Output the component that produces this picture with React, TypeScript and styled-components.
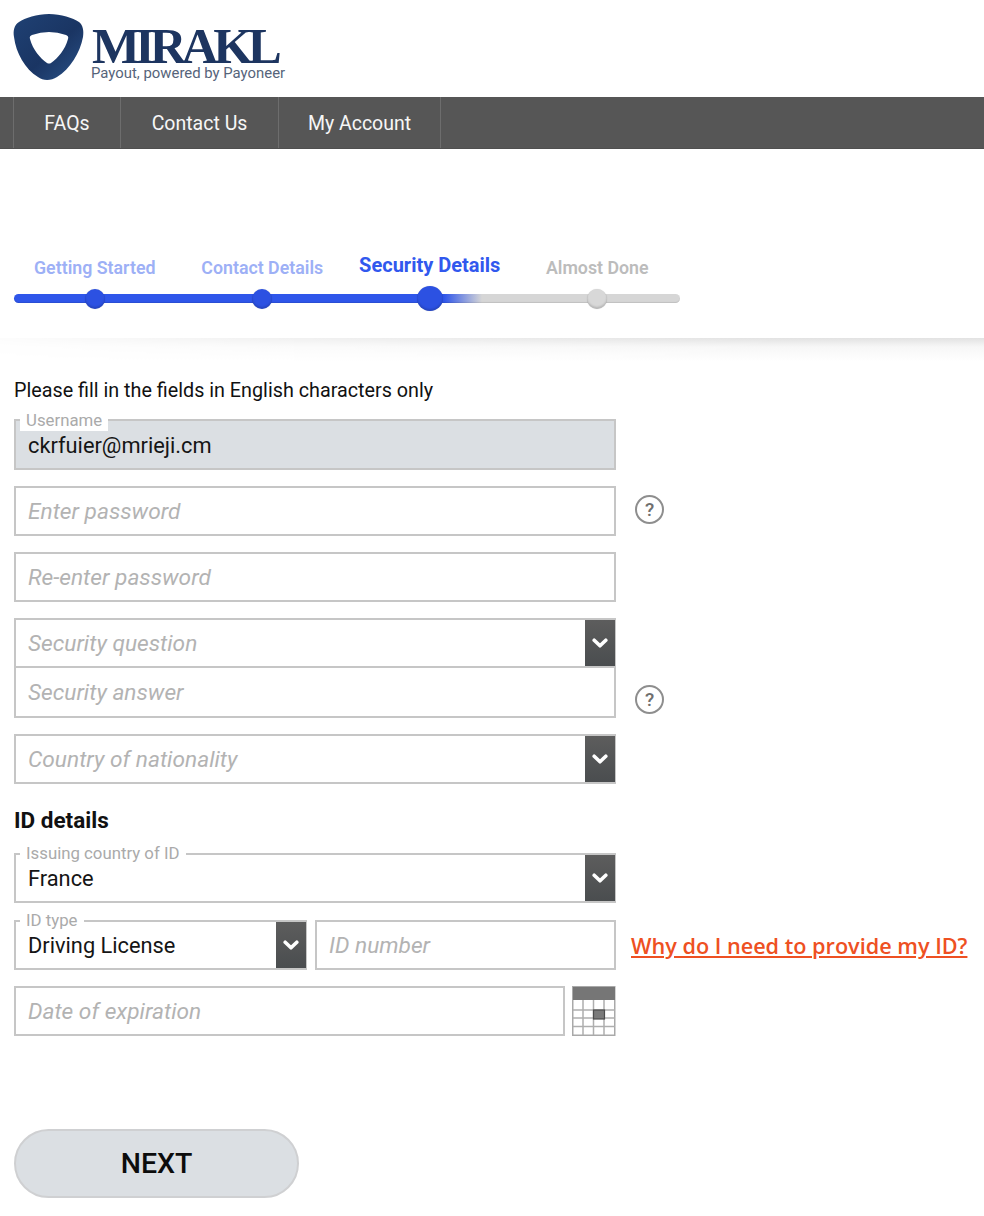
import React from "react";
import styled, { createGlobalStyle } from "styled-components";

const Global = createGlobalStyle`
  html, body { margin: 0; padding: 0; background: #fff; }
  body { font-family: Roboto, "Noto Sans", Arial, sans-serif; color: #111; }
  * { box-sizing: border-box; }
`;

const Page = styled.div`
  width: 984px;
  height: 1216px;
  overflow: hidden;
`;

const Header = styled.header`
  height: 97px;
  padding: 13px 0 0 13px;
  display: flex;
  gap: 7px;
`;

const Brand = styled.div`
  display: flex;
  flex-direction: column;
`;

const Wordmark = styled.div`
  font-family: "Liberation Serif", serif;
  font-weight: 700;
  font-size: 51px;
  line-height: 36px;
  height: 36px;
  margin-top: 15px;
  letter-spacing: -5.1px;
  color: #1d3560;
`;

const Tagline = styled.div`
  font-size: 14.9px;
  line-height: 16px;
  margin-left: -1px;
  margin-top: 1px;
  color: #56647a;
  white-space: nowrap;
`;

const Nav = styled.nav`
  height: 52px;
  background: #565656;
  padding-left: 13px;
  display: flex;
  border-bottom: 1px solid #4f4f4f;
`;

const NavItem = styled.a`
  display: flex;
  align-items: center;
  justify-content: center;
  padding-top: 2px;
  width: ${(p) => p.$w}px;
  color: #f6f6f6;
  font-size: 19.5px;
  border-left: 1px solid #6d6d6d;
  &:last-child { border-right: 1px solid #6d6d6d; }
`;

const Stepper = styled.section`
  height: 189px;
  padding: 103px 0 0 11px;
`;

const StepLabels = styled.div`
  display: grid;
  grid-template-columns: repeat(4, 167.5px);
  height: 36px;
  align-items: center;
`;

const StepLabel = styled.div`
  text-align: center;
  white-space: nowrap;
  font-weight: ${(p) => (p.$state === "current" ? 700 : 600)};
  font-size: ${(p) => (p.$state === "current" ? 20 : 17.8)}px;
  margin-top: ${(p) => (p.$state === "current" ? -11 : -6)}px;
  color: ${(p) =>
    p.$state === "current" ? "#3158ee" : p.$state === "done" ? "#9db0f6" : "#bcbcbc"};
`;

const Track = styled.div`
  position: relative;
  margin: 6px 0 0 3px;
  width: 666px;
  height: 9px;
  border-radius: 5px;
  background: linear-gradient(90deg, #2f56ea 0, #2f56ea 430px, #d6d6d6 468px, #d6d6d6 100%);
  box-shadow: inset 0 -1px 1px rgba(0,0,0,.1);
`;

const DotRow = styled.div`
  position: absolute;
  left: -3px;
  top: -8px;
  height: 25px;
  display: grid;
  grid-template-columns: repeat(4, 167.5px);
  align-items: center;
  justify-items: center;
`;

const Dot = styled.span`
  display: block;
  width: ${(p) => (p.$state === "current" ? 26 : 20)}px;
  height: ${(p) => (p.$state === "current" ? 25 : 20)}px;
  border-radius: 50%;
  background: ${(p) => (p.$state === "todo" ? "#d8d8d8" : "#2c51e2")};
  box-shadow: inset 0 -2px 2px rgba(0,0,0,.15), 0 0 1px rgba(0,0,0,.2);
`;

const ShadowBand = styled.div`
  height: 24px;
  background: linear-gradient(180deg, #e2e2e2 0, #f7f7f7 9px, #fff 24px);
  -webkit-mask-image: linear-gradient(90deg, rgba(0,0,0,.1) 0, rgba(0,0,0,.5) 30%, #000 80%);
  mask-image: linear-gradient(90deg, rgba(0,0,0,.1) 0, rgba(0,0,0,.5) 30%, #000 80%);
`;

const Form = styled.main`
  padding: 17px 0 0 14px;
  display: flex;
  flex-direction: column;
`;

const Notice = styled.p`
  margin: 0;
  height: 41px;
  font-size: 19.75px;
  line-height: 24px;
  color: #111;
`;

const Row = styled.div`
  display: flex;
  align-items: center;
  margin-top: ${(p) => p.$top ?? 0}px;
`;

const Field = styled.div`
  position: relative;
  flex: none;
  width: ${(p) => p.$w ?? 602}px;
  height: ${(p) => p.$h ?? 51}px;
  margin-left: ${(p) => p.$ml ?? 0}px;
  display: flex;
  align-items: center;
  padding-left: 12px;
  background: ${(p) => (p.$filled ? "#dbdfe3" : "#fff")};
  border: 2px solid #c6c6c6;
  ${(p) => p.$joined && "border-top: 0;"}
`;

const Placeholder = styled.span`
  font-style: italic;
  font-size: 22.7px;
  color: #b3b3b3;
  white-space: nowrap;
`;

const Value = styled.span`
  font-size: 21.8px;
  color: #151515;
  line-height: 26px;
  margin-top: 2px;
  white-space: nowrap;
`;

const Legend = styled.label`
  position: absolute;
  left: 4px;
  top: ${(p) => (p.$tall ? -10 : -11)}px;
  padding: 0 6px;
  height: ${(p) => (p.$tall ? 20 : 18)}px;
  line-height: 18px;
  font-size: 16.8px;
  color: #aaaaaa;
  background: #fff;
  white-space: nowrap;
`;

const SelectButton = styled.span`
  position: absolute;
  right: -1px;
  top: 0;
  bottom: 0;
  width: 30px;
  display: flex;
  align-items: center;
  justify-content: center;
  background: linear-gradient(180deg, #5d5d5d, #4a4d4f);
`;

const Help = styled.span`
  width: 29px;
  height: 29px;
  margin-left: 19px;
  margin-top: ${(p) => p.$top ?? 0}px;
  border: 2px solid #8e8e8e;
  border-radius: 50%;
  display: flex;
  align-items: center;
  justify-content: center;
  font-size: 19px;
  font-weight: 500;
  color: #6f6f6f;
`;

const Stack = styled.div`
  display: flex;
  flex-direction: column;
`;

const Heading = styled.h2`
  margin: 21px 0 0;
  height: 48px;
  font-size: 22.5px;
  line-height: 30px;
  font-weight: 700;
  color: #111;
`;

const WhyLink = styled.a`
  margin-left: 15px;
  font-family: "Open Sans", "Noto Sans", sans-serif;
  font-size: 21.65px;
  font-weight: 600;
  color: #ee5022;
  text-decoration: underline;
  white-space: nowrap;
`;

const CalendarIcon = styled.svg`
  flex: none;
  margin-left: 7px;
`;

const NextButton = styled.button`
  display: block;
  width: 285px;
  height: 69px;
  margin-top: 93px;
  border: 2px solid #cfd0d2;
  border-radius: 35px;
  background: #dbdfe3;
  font-family: Roboto, Arial, sans-serif;
  font-size: 28.5px;
  font-weight: 500;
  color: #0c0c0c;
  padding: 0;
`;

const Chevron = () => (
  <svg width="16" height="11" viewBox="0 0 16 11" aria-hidden="true">
    <path d="M2.2 2.2 8 7.8l5.8-5.6" fill="none" stroke="#fff" strokeWidth="3.6" strokeLinecap="round" strokeLinejoin="round" />
  </svg>
);

const Logo = () => (
  <svg width="72" height="70" viewBox="0 0 72 70" aria-hidden="true">
    <defs>
      <linearGradient id="shield" x1="0" y1="0" x2="1" y2="1">
        <stop offset="0" stopColor="#1f4174" />
        <stop offset="0.55" stopColor="#1a3563" />
        <stop offset="1" stopColor="#2a5288" />
      </linearGradient>
    </defs>
    <path
      fillRule="evenodd"
      fill="url(#shield)"
      d="M36 1C48 1 60 5 66 9c4 3 5 9 4 15C67 40 57 56 44 64c-6 4-14 4-19 0C12 56 3 40 1 24 0 18 1 12 6 9 12 5 24 1 36 1ZM19 22Q36 16 53 22q3 1 2 4C52 37 45 45 38 50q-2 1-4 0C27 45 20 37 17 26q-1-3 2-4Z"
    />
  </svg>
);

const Calendar = () => {
  const xs = [11, 21.5, 32];
  const ys = [24, 32, 40.5];
  return (
    <CalendarIcon width="44" height="50" viewBox="0 0 44 50" aria-hidden="true">
      <rect x="0.75" y="0.75" width="42" height="48.5" fill="#fff" stroke="#a9a9a9" strokeWidth="1.5" />
      <rect x="1" y="1" width="42" height="13" fill="#767676" />
      {xs.map((x) => (
        <line key={x} x1={x} x2={x} y1="14" y2="49" stroke="#aeaeae" strokeWidth="1.5" />
      ))}
      {ys.map((y) => (
        <line key={y} x1="1" x2="43" y1={y} y2={y} stroke="#aeaeae" strokeWidth="1.5" />
      ))}
      <rect x="21.5" y="24" width="11" height="9" fill="#7a7a7a" stroke="#4c4c4c" strokeWidth="1.2" />
    </CalendarIcon>
  );
};

const steps = [
  { label: "Getting Started", state: "done" },
  { label: "Contact Details", state: "done" },
  { label: "Security Details", state: "current" },
  { label: "Almost Done", state: "todo" },
];

export default function App() {
  return (
    <Page>
      <Global />
      <Header>
        <Logo />
        <Brand>
          <Wordmark>MIRAKL</Wordmark>
          <Tagline>Payout, powered by Payoneer</Tagline>
        </Brand>
      </Header>
      <Nav>
        <NavItem $w={107}>FAQs</NavItem>
        <NavItem $w={158}>Contact Us</NavItem>
        <NavItem $w={163}>My Account</NavItem>
      </Nav>
      <Stepper>
        <StepLabels>
          {steps.map((s) => (
            <StepLabel key={s.label} $state={s.state}>{s.label}</StepLabel>
          ))}
        </StepLabels>
        <Track>
          <DotRow>
            {steps.map((s) => (
              <Dot key={s.label} $state={s.state} />
            ))}
          </DotRow>
        </Track>
      </Stepper>
      <ShadowBand />
      <Form>
        <Notice>Please fill in the fields in English characters only</Notice>
        <Row $top={-1}>
          <Field $filled>
            <Legend $tall>Username</Legend>
            <Value>ckrfuier@mrieji.cm</Value>
          </Field>
        </Row>
        <Row $top={16}>
          <Field $h={50}><Placeholder>Enter password</Placeholder></Field>
          <Help $top={-4}>?</Help>
        </Row>
        <Row $top={16}>
          <Field $h={50}><Placeholder>Re-enter password</Placeholder></Field>
        </Row>
        <Row $top={16}>
          <Stack>
            <Field $h={50}>
              <Placeholder>Security question</Placeholder>
              <SelectButton><Chevron /></SelectButton>
            </Field>
            <Field $h={50} $joined><Placeholder>Security answer</Placeholder></Field>
          </Stack>
          <Help $top={62}>?</Help>
        </Row>
        <Row $top={16}>
          <Field $h={50}>
            <Placeholder>Country of nationality</Placeholder>
            <SelectButton><Chevron /></SelectButton>
          </Field>
        </Row>
        <Heading>ID details</Heading>
        <Row>
          <Field $h={50}>
            <Legend>Issuing country of ID</Legend>
            <Value>France</Value>
            <SelectButton><Chevron /></SelectButton>
          </Field>
        </Row>
        <Row $top={17}>
          <Field $w={293} $h={50}>
            <Legend>ID type</Legend>
            <Value>Driving License</Value>
            <SelectButton><Chevron /></SelectButton>
          </Field>
          <Field $w={301} $h={50} $ml={8}><Placeholder>ID number</Placeholder></Field>
          <WhyLink>Why do I need to provide my ID?</WhyLink>
        </Row>
        <Row $top={16}>
          <Field $w={551} $h={50}><Placeholder>Date of expiration</Placeholder></Field>
          <Calendar />
        </Row>
        <NextButton>NEXT</NextButton>
      </Form>
    </Page>
  );
}
